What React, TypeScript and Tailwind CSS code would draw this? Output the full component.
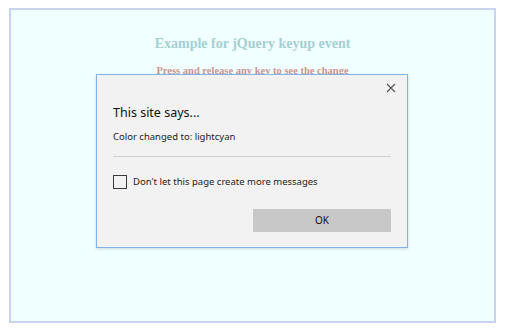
export default function App() {
  return (
    <div className="w-[507px] h-[333px] bg-white pt-[8px] pl-[9px]">
      <div className="relative w-[487px] h-[315px] border-2 border-[#c6d4ef] bg-[#f0ffff] text-center font-['Liberation_Serif',serif] font-bold">
        <h2 className="pt-[25px] text-[14px] leading-[18px] text-[#a6cfd1]">
          Example for jQuery keyup event
        </h2>
        <p className="mt-[11px] text-[10.5px] leading-[14px] text-[#cc968f]">
          Press and release any key to see the change
        </p>

        {/* alert dialog */}
        <div className="absolute left-[85px] top-[64px] w-[312px] h-[174px] border border-[#80b3e6] bg-[#f2f2f2] text-left font-['Noto_Sans',sans-serif] font-normal text-[#1a1a1a] shadow-[0_1px_3px_rgba(0,0,0,0.15)]">
          <div className="flex justify-end pr-[11px] pt-[6px] h-[24px]">
            <svg width="10" height="10" viewBox="0 0 10 10" className="mt-[2px]">
              <path d="M1 1L9 9M9 1L1 9" stroke="#555" strokeWidth="1.1" />
            </svg>
          </div>
          <div className="px-[16px]">
            <div className="mt-[5px] text-[12.5px] leading-[18px] text-[#111]">This site says...</div>
            <div className="mt-[8px] text-[9.5px] leading-[14px] text-[#222]">Color changed to: lightcyan</div>
            <div className="mt-[12px] h-px bg-[#cfcfcf]" />
            <label className="mt-[18px] flex items-center gap-[6px] text-[9.5px] leading-[14px] text-[#222]">
              <span className="w-[14px] h-[14px] border border-[#3a3a3a] bg-[#f2f2f2]" />
              Don't let this page create more messages
            </label>
            <div className="mt-[20px] flex justify-end">
              <button className="w-[138px] h-[23px] bg-[#c8c8c8] text-[10px] text-[#111]">OK</button>
            </div>
          </div>
        </div>
      </div>
    </div>
  );
}
